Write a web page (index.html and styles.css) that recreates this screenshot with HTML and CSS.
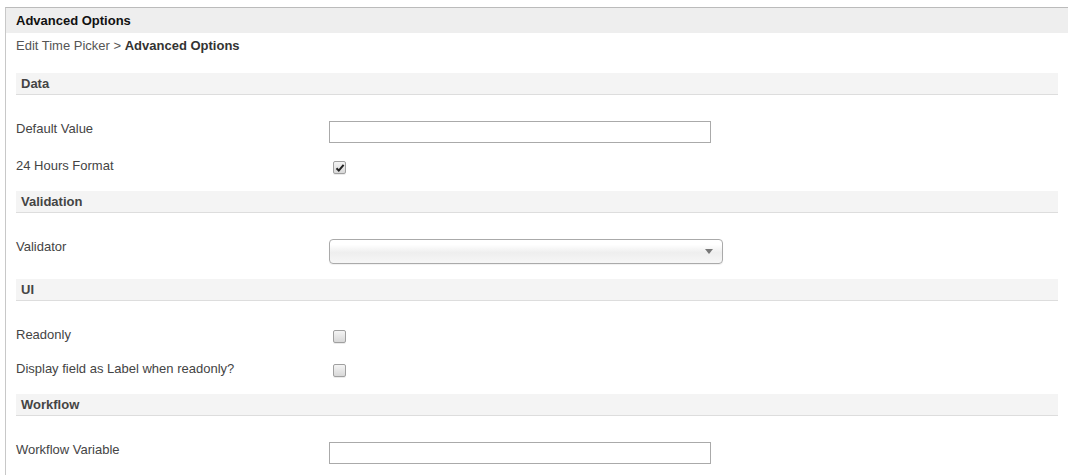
FILE: index.html
```html
<!DOCTYPE html>
<html lang="en">
<head>
  <meta charset="UTF-8">
  <title>Advanced Options</title>
  <link rel="stylesheet" href="styles.css">
</head>
<body>
  <div class="page">
    <div class="page-header">Advanced Options</div>
    <div class="content">
      <div class="breadcrumb">Edit Time Picker &gt; <b>Advanced Options</b></div>

      <div class="section-title first">Data</div>
      <div class="row">
        <label class="row-label">Default Value</label>
        <input type="text" class="text-input">
      </div>
      <div class="row">
        <label class="row-label">24 Hours Format</label>
        <span class="checkbox">
          <svg width="10" height="10" viewBox="0 0 10 10"><path d="M1.5 5.2 L3.8 7.6 L8.6 1.8" fill="none" stroke="#222" stroke-width="2"/></svg>
        </span>
      </div>

      <div class="section-title">Validation</div>
      <div class="row row-select">
        <label class="row-label">Validator</label>
        <div class="select"><span class="caret"></span></div>
      </div>

      <div class="section-title">UI</div>
      <div class="row">
        <label class="row-label">Readonly</label>
        <span class="checkbox"></span>
      </div>
      <div class="row">
        <label class="row-label">Display field as Label when readonly?</label>
        <span class="checkbox"></span>
      </div>

      <div class="section-title">Workflow</div>
      <div class="row">
        <label class="row-label">Workflow Variable</label>
        <input type="text" class="text-input">
      </div>
    </div>
  </div>
</body>
</html>
```

FILE: styles.css
```css
body {
  margin: 0; font-family: "Liberation Sans", Arial, sans-serif; font-size: 13px;
  color: #333; background: #fff; overflow: hidden; }
.page {
  margin: 7px 0 0 5px; border-top: 1px solid #bbb; border-left: 1px solid #c8c8c8;
  min-height: 470px; }
.page-header {
  background: #eee; height: 25px; line-height: 25px; padding-left: 10px;
  font-weight: bold; color: #111; }
.content {
  padding: 0 10px; }
.breadcrumb {
  line-height: 16px; padding-top: 5px; color: #555; }
.breadcrumb b {
  color: #333; }
.section-title {
  background: #f4f4f4; border-bottom: 1px solid #ddd; height: 21px; line-height: 21px;
  padding-left: 5px; font-weight: bold; color: #444; margin: 1px 0 25px; }
.section-title.first {
  margin-top: 19px; }
.row {
  display: flex; align-items: flex-start; margin-bottom: 14px; }
.row-select {
  margin-bottom: 15px; }
.row-label {
  width: 313px; line-height: 17px; color: #444; flex-shrink: 0; }
.text-input {
  box-sizing: border-box; width: 382px; height: 22px; margin: 1px 0 0;
  border: 1px solid #aaa; padding: 2px 4px; font: inherit; }
.checkbox {
  box-sizing: border-box; width: 13px; height: 13px; margin: 4px 0 3px 4px;
  border: 1px solid #a0a0a0; border-radius: 2px;
  background: linear-gradient(#f4f4f4, #d8d8d8);
  box-shadow: 0 1px 0 rgba(0, 0, 0, 0.08);
  display: flex; align-items: center; justify-content: center; }
.select {
  box-sizing: border-box; width: 394px; height: 25px; margin-top: 1px; position: relative;
  border: 1px solid #aaa; border-radius: 4px;
  background: linear-gradient(#fff 20%, #eee 55%, #f6f6f6);
  box-shadow: 0 1px 1px rgba(0, 0, 0, 0.06); }
.caret {
  position: absolute; right: 9px; top: 9px; width: 0; height: 0;
  border-left: 4px solid transparent; border-right: 4px solid transparent;
  border-top: 5px solid #777; }
```
